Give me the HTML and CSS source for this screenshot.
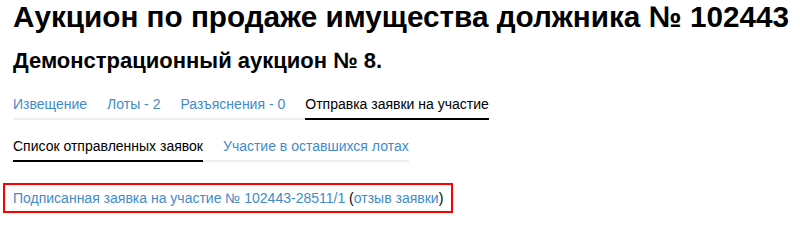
FILE: index.html
```html
<!DOCTYPE html>
<html lang="ru">
<head>
<meta charset="utf-8">
<title>Аукцион</title>
<link rel="stylesheet" href="styles.css">
</head>
<body>
<div class="page">
  <h1 class="title">Аукцион по продаже имущества должника № 102443</h1>
  <h2 class="subtitle">Демонстрационный аукцион № 8.</h2>
  <ul class="tabs tabs-main">
    <li class="tab"><a href="#">Извещение</a></li>
    <li class="tab"><a href="#">Лоты - 2</a></li>
    <li class="tab"><a href="#">Разъяснения - 0</a></li>
    <li class="tab active"><span>Отправка заявки на участие</span></li>
  </ul>
  <div></div>
  <ul class="tabs tabs-sub">
    <li class="tab active"><span>Список отправленных заявок</span></li>
    <li class="tab"><a href="#">Участие в оставшихся лотах</a></li>
  </ul>
  <div class="requests">
    <div class="request"><a href="#">Подписанная заявка на участие № 102443-28511/1</a> (<a href="#">отзыв заявки</a>)</div>
  </div>
</div>
</body>
</html>
```
FILE: styles.css
```css
html, body {
  margin: 0;
  padding: 0;
  background: #fff;
}
body {
  font-family: "Liberation Sans", Arial, sans-serif;
  color: #000;
}
.page {
  padding: 0 13px;
}
.title {
  margin: 0;
  font-size: 29.7px;
  line-height: 34px;
  font-weight: bold;
  white-space: nowrap;
}
.subtitle {
  margin: 14px 0 0;
  font-size: 22px;
  line-height: 25px;
  font-weight: bold;
}
.tabs {
  display: inline-flex;
  list-style: none;
  margin: 0;
  padding: 0;
  border-bottom: 2px solid #eeeeee;
  font-size: 14px;
  line-height: 16px;
}
.tabs-main {
  margin-top: 23px;
}
.tabs-sub {
  margin-top: 18px;
}
.tab {
  padding-bottom: 6px;
  margin-bottom: -2px;
  margin-right: 20px;
  border-bottom: 2px solid transparent;
}
.tab:last-child {
  margin-right: 0;
}
.tab.active {
  border-bottom-color: #000;
}
a {
  color: #428bca;
  text-decoration: none;
}
.requests {
  margin-top: 21px;
}
.request {
  display: inline-block;
  margin-left: -10px;
  padding: 5px 8px;
  border: 2px solid #ff0000;
  font-size: 14px;
  line-height: 16px;
  color: #000;
}
```
